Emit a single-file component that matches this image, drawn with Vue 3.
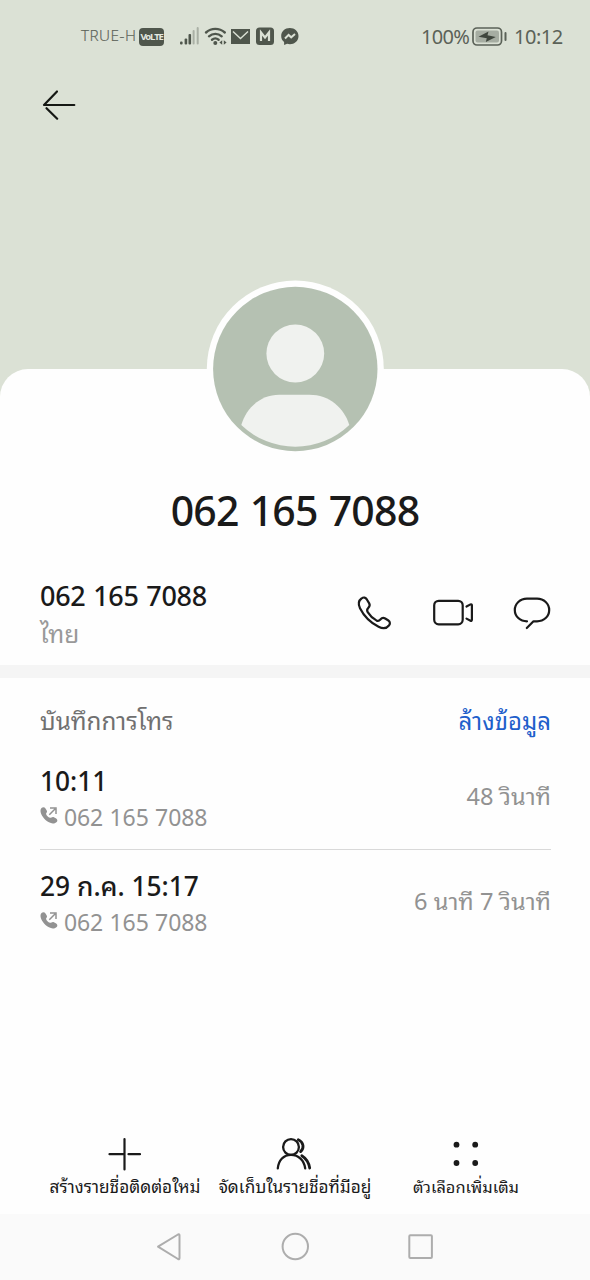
<script setup>
const calls = [
  { time: '10:11', number: '062 165 7088', duration: '48 วินาที', key: 'first' },
  { time: '29 ก.ค. 15:17', number: '062 165 7088', duration: '6 นาที 7 วินาที', key: 'second' },
]
</script>

<template>
  <div class="screen">
    <header class="hero">
      <div class="status">
        <span class="carrier">TRUE-H</span>
        <span class="volte">VoLTE</span>
        <svg class="signals" width="122" height="24" viewBox="178 25 122 24">
          <g fill="#4f564c">
            <rect x="180" y="41.5" width="2.6" height="3" rx="1" />
            <rect x="184.600" y="38.500" width="2.600" height="6" rx="1" />
            <rect x="188.500" y="34" width="2.600" height="10.500" rx="1" />
            <rect x="192.600" y="30" width="2" height="14.500" rx="1" opacity=".35" />
            <rect x="196.700" y="27" width="2" height="17.500" rx="1" opacity=".35" />
            <circle cx="215.300" cy="43" r="2" />
            <path d="M231 29h19v15h-19z" />
            <rect x="256" y="27.500" width="18" height="17.500" rx="3.500" />
            <path d="M289.800 28c-4.900 0-8.600 3.400-8.600 8 0 2.600 1 4.600 2.900 6v3l3-1.300c4.900 1.600 11.400-1.100 11.400-7.700 0-4.600-3.800-8-8.700-8z" />
            <path d="M222.200 40.200v4.600l-2.800-2.300zM223.800 40.200v4.600l2.800-2.300z" />
          </g>
          <g fill="none" stroke="#4f564c" stroke-width="2.400" stroke-linecap="round">
            <path d="M206 32.500c5.400-4.800 13.200-4.800 18.800 0M209 36.300c3.700-3.200 9-3.200 12.700 0M212 39.700c2-1.600 4.600-1.600 6.600 0" />
          </g>
          <g fill="none" stroke="#dbe1d5" stroke-width="1.800">
            <path d="M233 31.500l7.500 7 7.500-7" stroke-width="1.400" />
            <path d="M261 41v-8.500l4 5 4-5V41" stroke-width="2.200" />
            <path d="M285 38.500l3.600-3.600 2.600 2.400 3.800-3.200" stroke-width="2" />
          </g>
        </svg>
        <span class="percent">100%</span>
        <svg class="battery" width="36" height="20" viewBox="472 27 36 20">
          <rect x="473" y="28" width="28.500" height="17" rx="4" fill="none" stroke="#5b6258" stroke-width="1.700" />
          <rect x="475.500" y="30.500" width="23.500" height="12" rx="2" fill="#a6ada2" />
          <path d="M478.500 36.800l10-5.300-1 3.700 8.300 1.700-10 5 1-3.700z" fill="#3f463d" />
          <path d="M505.500 33v7" stroke="#5b6258" stroke-width="2" stroke-linecap="round" />
        </svg>
        <span class="clock">10:12</span>
      </div>
      <svg class="back" width="36" height="32" viewBox="41 89 36 32" fill="none" stroke="#151814" stroke-width="2.200" stroke-linecap="round" stroke-linejoin="round">
        <path d="M74.300 105H44L57 91.500M46.500 108.200L57.200 118.700" />
      </svg>
    </header>

    <main class="sheet">
      <svg class="avatar" width="178" height="178" viewBox="-89.300 -89 178 178">
        <circle r="88.500" fill="#fefefe" />
        <circle r="82.200" fill="#b5c1b2" />
        <circle cy="-15.500" r="28.900" fill="#f0f2ef" />
        <path d="M-54 56C-49 39-35 25.700-16 25.700H14C34 25.700 49 39 54 56A78 78 0 0 1-54 56z" fill="#f0f2ef" />
      </svg>
      <h1>062 165 7088</h1>

      <section class="contact">
        <div class="contact-text">
          <div class="phone">062 165 7088</div>
          <div class="country">ไทย</div>
        </div>
        <svg width="200" height="40" viewBox="354 592 200 40" fill="none" stroke="#1a1a1a" stroke-width="2.200" stroke-linecap="round" stroke-linejoin="round">
          <path d="M361.500 598.500c2.300-1.800 4-1.100 5.500 1.200l2.200 3.700c1.200 2 .4 3.200-1 4.700-1.500 1.600-1.400 2.600-.5 4 2.300 3.700 5 6.300 8.700 8.300 1.600.8 2.800.5 4-.9 1.500-1.800 3-2 4.800-1l3.200 2c2 1.300 1.800 3.500.5 5-2.500 3.200-6.500 3.200-10.300 1.300-8.300-4.300-14.500-10.400-18.600-18.600-1.800-3.700-1.700-7.300 1.500-9.700z" />
          <rect x="434.200" y="600.800" width="28.500" height="23.500" rx="4.500" />
          <path d="M466.500 606.500l4-2.100c.8-.4 1.400 0 1.400.9v14.500c0 .9-.6 1.300-1.400.9l-4-2.100" />
          <path d="M527 621.300c-7 0-12.200-5-12.200-11.300s5.200-11.300 12.200-11.300h10c7 0 12.200 5 12.200 11.300s-5.200 11.300-12.200 11.300h-3.500l-6.700 6.700" />
        </svg>
      </section>

      <section class="history">
        <div class="history-head">
          <span class="title">บันทึกการโทร</span>
          <span class="clear">ล้างข้อมูล</span>
        </div>
        <article v-for="call in calls" :key="call.key" class="call" :class="call.key">
          <div class="call-info">
            <div class="time">{{ call.time }}</div>
            <div class="number-row">
              <svg width="18" height="18" viewBox="0 0 18 18">
                <path d="M1.500 2.100C2.800.8 4.500.9 5.500 2.500l1.200 2c1 1.700-.8 2.500-.6 3.500.4 1.700 2 3.300 3.900 3.700 1.300.2 2.300-1.500 3.900-.5l2.300 1.400c1.500 1 1.500 2.600.2 3.600-3.200 2.700-8 .5-10.900-2.100C2.300 11-1.300 5.100 1.500 2.100z" fill="#929292" />
                <path d="M9.300 8.700l5.700-5.700M10 1.900h6v6" fill="none" stroke="#929292" stroke-width="1.500" />
              </svg>
              <span>{{ call.number }}</span>
            </div>
          </div>
          <div class="duration">{{ call.duration }}</div>
        </article>
      </section>

      <footer class="actions">
        <div class="action create">
          <svg width="36" height="36" viewBox="106 1136 36 36" fill="none" stroke="#1a1a1a" stroke-width="2.200" stroke-linecap="round">
            <path d="M123.500 1139v30.500M108.500 1154.200h15M127.500 1154.200h11.500" />
          </svg>
          <span>สร้างรายชื่อติดต่อใหม่</span>
        </div>
        <div class="action save">
          <svg width="36" height="36" viewBox="277 1136 36 36" fill="none" stroke="#1a1a1a" stroke-width="2.300" stroke-linecap="round">
            <circle cx="291" cy="1147" r="7.900" />
            <path d="M277.800 1168.300c.8-8 5.800-13.500 13.200-13.500s13.200 5.500 14.200 13.500" />
            <path d="M298.300 1139.700c5.300 2.300 6.300 8.500 2.300 11.900M301.800 1155.700c4.600 2.900 7.100 7.100 7.900 12.300" stroke-width="2.800" />
          </svg>
          <span>จัดเก็บในรายชื่อที่มีอยู่</span>
        </div>
        <div class="action more">
          <svg width="36" height="36" viewBox="448 1136 36 36" fill="#1a1a1a">
            <circle cx="456.500" cy="1144.700" r="2.900" /><circle cx="475.200" cy="1144.700" r="2.900" />
            <circle cx="456.500" cy="1163" r="2.900" /><circle cx="475.200" cy="1163" r="2.900" />
          </svg>
          <span>ตัวเลือกเพิ่มเติม</span>
        </div>
      </footer>
    </main>

    <nav class="navbar">
      <svg width="590" height="66" viewBox="0 1214 590 66" fill="none" stroke="#adadad" stroke-width="2" stroke-linejoin="round">
        <path d="M158 1246.700L178 1234.500q1.500-.7 1.500 1v22.500q0 1.700-1.500 1z" />
        <circle cx="295.300" cy="1246.500" r="12.700" />
        <rect x="409.300" y="1235.300" width="22.600" height="22.600" rx="1" />
      </svg>
    </nav>
  </div>
</template>

<style>
body { margin: 0; }
</style>

<style scoped>
.screen {
  width: 590px;
  height: 1280px;
  display: flex;
  flex-direction: column;
  overflow: hidden;
  background: #dbe1d5;
  font-family: "Noto Sans", "Noto Sans Thai Looped", Loma, Waree, Garuda, "Liberation Sans", sans-serif;
  color: #1a1a1a;
  white-space: nowrap;
}
.hero { height: 369px; flex: none; }
.status {
  height: 60px;
  padding: 13px 0 0 81px;
  box-sizing: border-box;
  display: flex;
  align-items: center;
  color: #5b6258;
}
.carrier { width: 58px; font: 300 15.300px/24px "Open Sans", sans-serif; margin-top: -3px; letter-spacing: .5px; -webkit-text-stroke: .2px currentColor; }
.volte {
  width: 25px; height: 18px;
  border-radius: 4px;
  background: #4f564c;
  color: #e4e9e0;
  font: 700 9.500px/18px "Open Sans", sans-serif;
  letter-spacing: -1.200px;
  text-align: center;
}
.signals { margin-left: 14px; }
.percent { width: 51px; margin-left: 121px; font-size: 20px; line-height: 26px; letter-spacing: -.7px; }
.clock { margin-left: 6px; font-size: 20px; line-height: 26px; letter-spacing: -.5px; }
.percent, .clock { padding-top: 1px; }
.back { display: block; margin: 29px 0 0 41px; }
.sheet {
  height: 845px;
  flex: none;
  display: flex;
  flex-direction: column;
  background: #fefefe;
  border-radius: 28px 28px 0 0;
}
.avatar { flex: none; align-self: center; margin: -89px 0 0 0; }
h1 {
  margin: 27px 0 0;
  height: 50px;
  font-size: 41px;
  line-height: 50px;
  font-weight: 500;
  text-align: center;
  letter-spacing: -.8px;
  word-spacing: 1.200px;
}
.contact {
  height: 143px;
  box-sizing: border-box;
  padding: 42px 36px 0 40px;
  display: flex;
  justify-content: space-between;
  border-bottom: 13px solid #f5f5f5;
}
.contact > svg { margin-top: 15px; }
.phone { font-size: 27px; line-height: 38px; font-weight: 500; letter-spacing: -.3px; word-spacing: 1px; }
.country { font-size: 24.500px; line-height: 34px; margin-top: 2px; color: #999; }
.history { padding: 0 39px 0 40px; }
.history-head { height: 77px; display: flex; justify-content: space-between; font-size: 24.200px; line-height: 86px; }
.title { color: #707070; }
.clear { color: #1f5fcb; font-size: 24px; }
.call { height: 95px; box-sizing: border-box; display: flex; justify-content: space-between; }
.call.first { border-bottom: 1px solid #d9d9d9; }
.second { margin-top: 11px; }
.time { font-size: 26.300px; line-height: 36px; font-weight: 500; margin-top: 8px; }
.second .time { margin-top: 7px; }
.number-row { display: flex; color: #929292; font-size: 23px; line-height: 30px; margin-top: 3px; letter-spacing: -.1px; word-spacing: .5px; }
.number-row svg { margin: 4px 6px 0 0; }
.duration { color: #929292; font-size: 23.600px; line-height: 82px; }
.second .duration { line-height: 81px; }
.actions { margin-top: auto; height: 78px; display: flex; }
.action { display: flex; flex-direction: column; align-items: center; font-size: 17.200px; line-height: 29px; }
.action svg { flex: none; overflow: visible; }
.create { width: 170px; margin-left: 40px; }
.save { width: 170px; }
.more { width: 172px; font-size: 16.400px; }
.navbar { height: 66px; background: #fafafa; }
.navbar svg { display: block; }
</style>
